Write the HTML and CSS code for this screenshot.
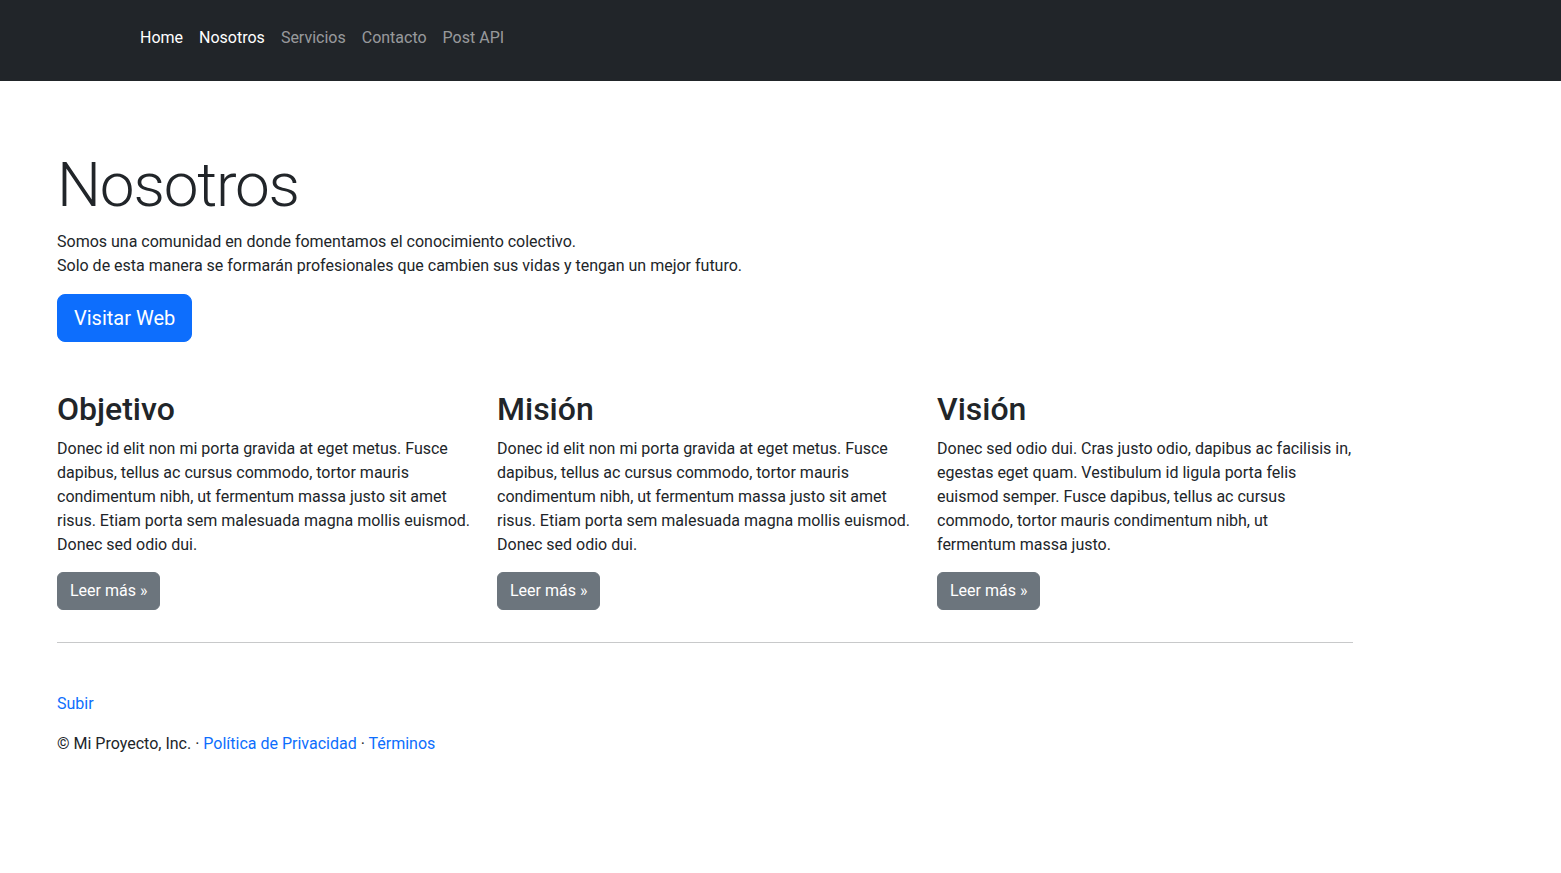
FILE: index.html
```html
<!DOCTYPE html>
<html lang="es">
<head>
<meta charset="utf-8">
<title>Nosotros</title>
<link rel="stylesheet" href="styles.css">
</head>
<body>
<header class="navbar">
  <nav class="nav">
    <a class="nav-link active" href="#">Home</a>
    <a class="nav-link active" href="#">Nosotros</a>
    <a class="nav-link" href="#">Servicios</a>
    <a class="nav-link" href="#">Contacto</a>
    <a class="nav-link" href="#">Post API</a>
  </nav>
</header>
<main class="container">
  <section class="hero">
    <h1 class="display">Nosotros</h1>
    <p class="intro">Somos una comunidad en donde fomentamos el conocimiento colectivo.<br>Solo de esta manera se formarán profesionales que cambien sus vidas y tengan un mejor futuro.</p>
    <a class="btn btn-primary btn-lg" href="#">Visitar Web</a>
  </section>
  <div class="row">
    <div class="col">
      <h2>Objetivo</h2>
      <p>Donec id elit non mi porta gravida at eget metus. Fusce dapibus, tellus ac cursus commodo, tortor mauris condimentum nibh, ut fermentum massa justo sit amet risus. Etiam porta sem malesuada magna mollis euismod. Donec sed odio dui.</p>
      <a class="btn btn-secondary" href="#">Leer más »</a>
    </div>
    <div class="col">
      <h2>Misión</h2>
      <p>Donec id elit non mi porta gravida at eget metus. Fusce dapibus, tellus ac cursus commodo, tortor mauris condimentum nibh, ut fermentum massa justo sit amet risus. Etiam porta sem malesuada magna mollis euismod. Donec sed odio dui.</p>
      <a class="btn btn-secondary" href="#">Leer más »</a>
    </div>
    <div class="col">
      <h2>Visión</h2>
      <p>Donec sed odio dui. Cras justo odio, dapibus ac facilisis in, egestas eget quam. Vestibulum id ligula porta felis euismod semper. Fusce dapibus, tellus ac cursus commodo, tortor mauris condimentum nibh, ut<br>fermentum massa justo.</p>
      <a class="btn btn-secondary" href="#">Leer más »</a>
    </div>
  </div>
  <hr class="divider">
  <footer class="footer">
    <p><a href="#">Subir</a></p>
    <p>© Mi Proyecto, Inc. · <a href="#">Política de Privacidad</a> · <a href="#">Términos</a></p>
  </footer>
</main>
</body>
</html>
```
FILE: styles.css
```css
* { box-sizing: border-box; }
body {
  margin: 0;
  font-family: Roboto, "Liberation Sans", sans-serif;
  font-size: 16px;
  line-height: 1.5;
  color: #212529;
  background: #fff;
}
a { color: #0d6efd; text-decoration: none; }

.navbar {
  background: #212529;
  height: 81px;
  padding: 18px 0 0 132px;
}
.nav { display: flex; }
.nav-link {
  display: block;
  padding: 8px 8px;
  color: rgba(255, 255, 255, 0.55);
}
.nav-link.active { color: #fff; }

.container {
  width: 1320px;
  margin-left: 45px;
  padding: 0 12px;
}
.hero { padding: 67px 0 48px; }
.display {
  margin: 0 0 8px;
  font-size: 62px;
  font-weight: 300;
  line-height: 1.2;
  letter-spacing: -1.2px;
}
.intro { margin: 0 0 16px; }

.btn {
  display: inline-block;
  border: 1px solid transparent;
  color: #fff;
  font-size: 16px;
  line-height: 1.5;
  padding: 6px 12px;
  border-radius: 6px;
}
.btn-lg { font-size: 20px; padding: 8px 16px; border-radius: 8px; }
.btn-primary { background: #0d6efd; border-color: #0d6efd; }
.btn-secondary { background: #6c757d; border-color: #6c757d; }

.row { display: flex; margin: 0 -12px; }
.col { flex: 1 1 0; padding: 0 12px; }
.col h2 {
  margin: 0 0 8px;
  font-size: 32px;
  font-weight: 500;
  line-height: 1.2;
}
.col p { margin: 0 0 15px; }

.divider {
  margin: 32px 0 0;
  border: 0;
  border-top: 1px solid #c8c9ca;
}
.footer { padding-top: 49px; }
.footer p { margin: 0 0 16px; }
```
